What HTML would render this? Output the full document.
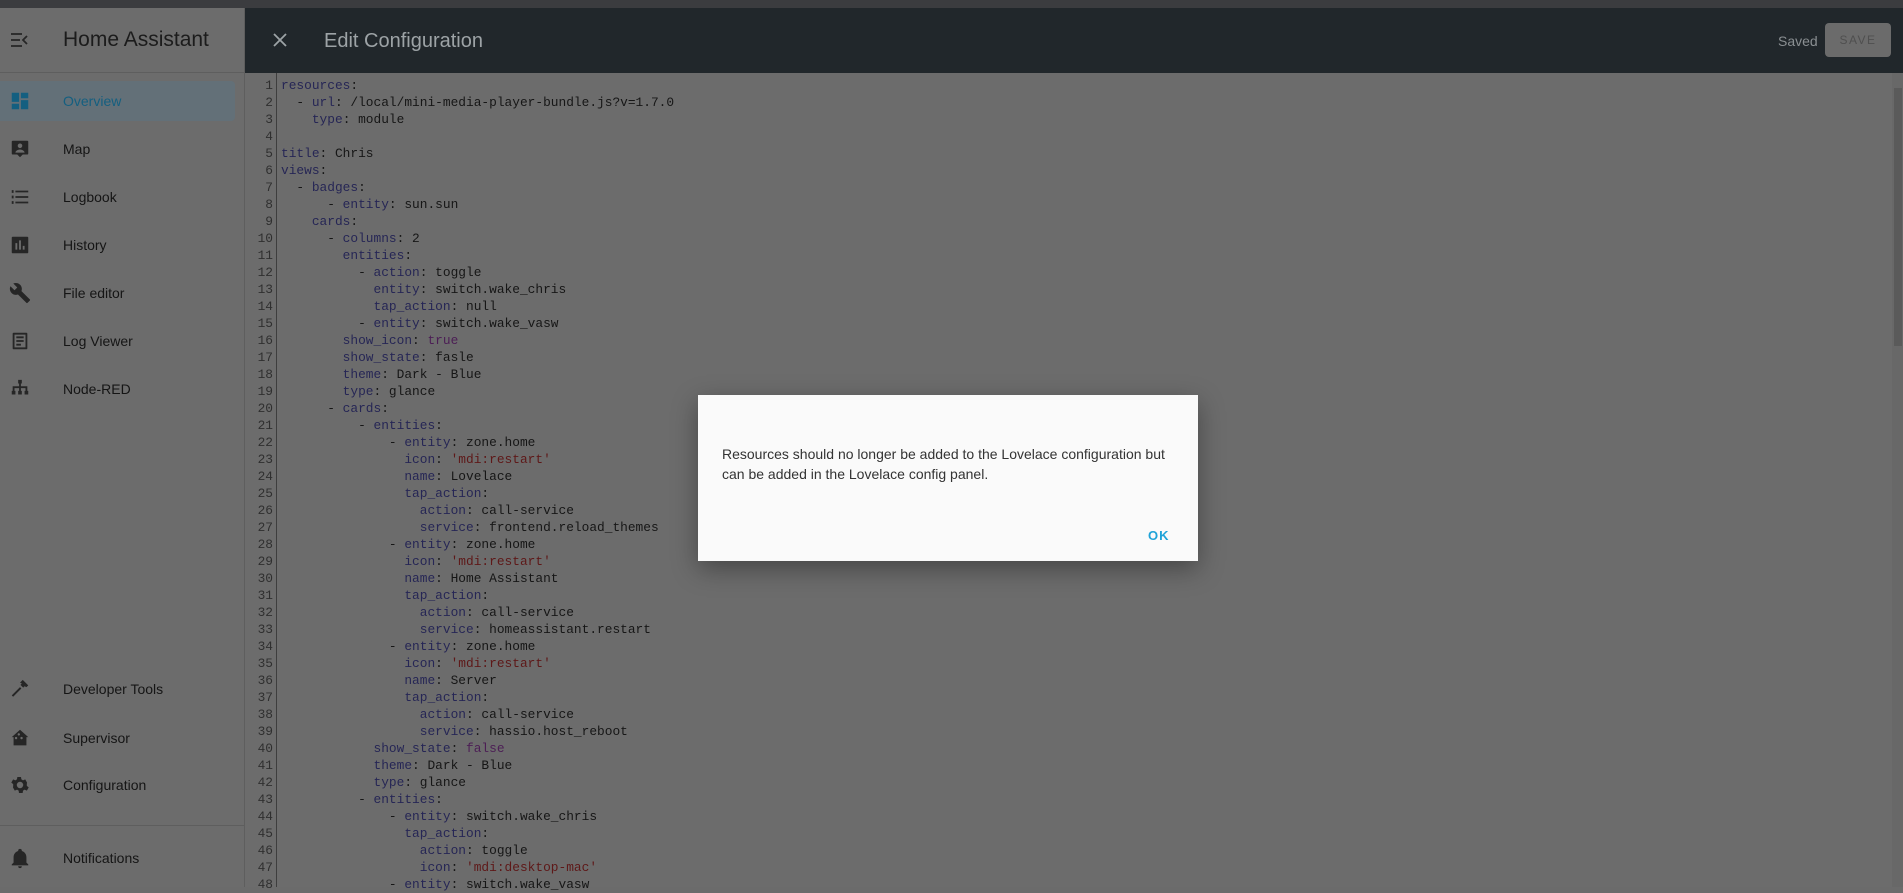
<!DOCTYPE html>
<html><head><meta charset="utf-8"><style>
*{margin:0;padding:0;box-sizing:border-box}
html,body{width:1903px;height:887px;overflow:hidden;background:#6b6b6b;font-family:"Liberation Sans",sans-serif}
.top{position:absolute;left:0;top:0;width:1903px;height:8px;background:#3b3c3f}
.side{position:absolute;left:0;top:8px;width:245px;height:879px;background:#6c6c6c;border-right:1px solid #5e5e5e}
.sh{height:65px;border-bottom:1px solid #5e5e5e;position:relative}
.sh .t{position:absolute;left:63px;top:20px;font-size:21px;color:#1c1c1c}
.item{position:absolute;left:0;height:40px;width:245px}
.item .l{position:absolute;left:63px;top:12px;font-size:14px;color:#151515;letter-spacing:0px}
.item svg{position:absolute;left:9px;top:9px}
.sel{background:#637078;width:235px;border-radius:0 4px 4px 0}
.sel .l{color:#145f80}
.hdr{position:absolute;left:245px;top:8px;width:1658px;height:65px;background:#21272b}
.hdr .t{position:absolute;left:79px;top:22px;font-size:20px;color:#9da3a6}
.saved{position:absolute;left:1533px;top:25px;font-size:14px;color:#8a8f92}
.save{position:absolute;left:1580px;top:15px;width:66px;height:34px;background:#6b6b6b;border-radius:4px;color:#4f4f4f;font-size:12px;letter-spacing:1.5px;text-align:center;line-height:34px}
.code{position:absolute;left:245px;top:73px;width:1647px;height:814px;background:#6c6c6c}
.gut{position:absolute;left:245px;top:73px;width:32px;height:814px;border-right:1px solid #3e3e3e}
pre{position:absolute;top:77px;font-family:"Liberation Mono",monospace;font-size:12.85px;line-height:17px}
.num{left:245px;width:28px;text-align:right;color:#2f2f2f}
.src{left:281px;color:#161616}
.k{color:#262655}.b{color:#4c1e55}.s{color:#5e1818}
.sb{position:absolute;left:1892px;top:73px;width:11px;height:814px;background:#686868}
.th{position:absolute;left:1894px;top:88px;width:8px;height:258px;background:#5a5a5a}
.dlg{position:absolute;left:698px;top:395px;width:500px;height:166px;background:#fafafa;box-shadow:0 8px 24px rgba(0,0,0,.35)}
.dlg p{position:absolute;left:24px;top:49px;width:460px;font-size:14px;line-height:20px;color:#333}
.ok{position:absolute;left:450px;top:133px;font-size:13px;font-weight:bold;color:#1fa3d8;letter-spacing:1px}
</style></head><body>
<div class="top"></div>
<div class="side">
 <div class="sh">
  <svg style="position:absolute;left:10px;top:24px" width="20" height="16" viewBox="0 0 20 16"><path d="M1 2h11M1 8h9M1 14h11M17 4l-4 4 4 4" stroke="#262626" stroke-width="1.8" fill="none"/></svg>
  <div class="t">Home Assistant</div>
 </div>
 <div class="item sel" style="top:73px"><svg width="22" height="22" viewBox="0 0 24 24"><path fill="#145f80" d="M13 3v6h8V3m-8 18h8V11h-8M3 21h8v-6H3m0-2h8V3H3v10z"/></svg><span class="l">Overview</span></div>
 <div class="item" style="top:121px"><svg width="22" height="22" viewBox="0 0 24 24"><path fill="#262626" d="M4 3h16a1 1 0 011 1v13a1 1 0 01-1 1h-5l-3 3-3-3H4a1 1 0 01-1-1V4a1 1 0 011-1zm8 3a2.5 2.5 0 100 5 2.5 2.5 0 000-5zm-5 10h10c0-2-3-3.5-5-3.5S7 14 7 16z"/></svg><span class="l">Map</span></div>
 <div class="item" style="top:169px"><svg width="22" height="22" viewBox="0 0 24 24"><path fill="#262626" d="M7 5h14v2H7zm0 6h14v2H7zm0 6h14v2H7zM3 4.5h2v3H3zm0 6h2v3H3zm0 6h2v3H3z"/></svg><span class="l">Logbook</span></div>
 <div class="item" style="top:217px"><svg width="22" height="22" viewBox="0 0 24 24"><path fill="#262626" d="M4 3h16a1 1 0 011 1v16a1 1 0 01-1 1H4a1 1 0 01-1-1V4a1 1 0 011-1zm3 14h2v-7H7zm4 0h2V7h-2zm4 0h2v-4h-2z"/></svg><span class="l">History</span></div>
 <div class="item" style="top:265px"><svg width="22" height="22" viewBox="0 0 24 24"><path fill="#262626" d="M22.7 19l-9.1-9.1c.9-2.3.4-5-1.5-6.9-2-2-5-2.4-7.4-1.3L9 6 6 9 1.6 4.7C.4 7.1.9 10.1 2.9 12.1c1.9 1.9 4.600 2.4 6.900 1.5l9.100 9.100c.4.4 1 .4 1.400 0l2.300-2.300c.5-.4.5-1.100.1-1.400z"/></svg><span class="l">File editor</span></div>
 <div class="item" style="top:313px"><svg width="22" height="22" viewBox="0 0 24 24"><path fill="#262626" d="M5 3h14a1 1 0 011 1v16a1 1 0 01-1 1H5a1 1 0 01-1-1V4a1 1 0 011-1zm1 2v14h12V5zm2 2h8v2H8zm0 4h8v2H8zm0 4h5v2H8z"/></svg><span class="l">Log Viewer</span></div>
 <div class="item" style="top:361px"><svg width="22" height="22" viewBox="0 0 24 24"><path fill="#262626" d="M10 2h4v4h-1v3h7v5h1v4h-4v-4h1v-3h-5v3h1v4h-4v-4h1v-3H6v3h1v4H3v-4h1V9h7V6h-1z"/></svg><span class="l">Node-RED</span></div>
 <div class="item" style="top:661px"><svg width="22" height="22" viewBox="0 0 24 24"><path fill="#262626" d="M3 19l9-9 1.5 1.5-9 9zM12 5l3-3 6 6-2 2-2-1-1.5 1.5-3-3L14 6z"/></svg><span class="l">Developer Tools</span></div>
 <div class="item" style="top:710px"><svg width="22" height="22" viewBox="0 0 24 24"><path fill="#262626" d="M12 3l9 8h-2v9H5v-9H3zm-3 9a1.3 1.3 0 100 .1zm6 0a1.3 1.3 0 100 .1zM12 8a1.3 1.3 0 100 .1z"/></svg><span class="l">Supervisor</span></div>
 <div class="item" style="top:757px"><svg width="22" height="22" viewBox="0 0 24 24"><path fill="#262626" d="M12 8.5a3.5 3.5 0 100 7 3.5 3.5 0 000-7zm7.4 4.5l2.1 1.6-2 3.5-2.5-1a7 7 0 01-1.7 1l-.4 2.6h-4l-.4-2.6a7 7 0 01-1.7-1l-2.5 1-2-3.5L4.6 13a7 7 0 010-2L2.5 9.4l2-3.5 2.5 1a7 7 0 011.7-1L9.1 3.3h4l.4 2.6a7 7 0 011.7 1l2.5-1 2 3.5L19.4 11a7 7 0 010 2z"/></svg><span class="l">Configuration</span></div>
 <div style="position:absolute;left:0;top:817px;width:245px;border-top:1px solid #5e5e5e"></div>
 <div class="item" style="top:830px"><svg width="22" height="22" viewBox="0 0 24 24"><path fill="#262626" d="M10 21h4a2 2 0 01-4 0zm11-2v1H3v-1l2-2v-6c0-3.1 2-5.8 5-6.7V4a2 2 0 014 0v.3c3 .9 5 3.6 5 6.7v6z"/></svg><span class="l">Notifications</span></div>
</div>
<div class="hdr">
 <svg style="position:absolute;left:28px;top:25px" width="14" height="14" viewBox="0 0 14 14"><path d="M1 1l12 12M13 1L1 13" stroke="#9da3a6" stroke-width="1.8"/></svg>
 <div class="t">Edit Configuration</div>
 <div class="saved">Saved</div>
 <div class="save">SAVE</div>
</div>
<div class="code"></div>
<div class="gut"></div>
<pre class="num">1
2
3
4
5
6
7
8
9
10
11
12
13
14
15
16
17
18
19
20
21
22
23
24
25
26
27
28
29
30
31
32
33
34
35
36
37
38
39
40
41
42
43
44
45
46
47
48</pre>
<pre class="src"><span class="k">resources</span>:
  - <span class="k">url</span>: /local/mini-media-player-bundle.js?v=1.7.0
    <span class="k">type</span>: module

<span class="k">title</span>: Chris
<span class="k">views</span>:
  - <span class="k">badges</span>:
      - <span class="k">entity</span>: sun.sun
    <span class="k">cards</span>:
      - <span class="k">columns</span>: 2
        <span class="k">entities</span>:
          - <span class="k">action</span>: toggle
            <span class="k">entity</span>: switch.wake_chris
            <span class="k">tap_action</span>: null
          - <span class="k">entity</span>: switch.wake_vasw
        <span class="k">show_icon</span>: <span class="b">true</span>
        <span class="k">show_state</span>: fasle
        <span class="k">theme</span>: Dark - Blue
        <span class="k">type</span>: glance
      - <span class="k">cards</span>:
          - <span class="k">entities</span>:
              - <span class="k">entity</span>: zone.home
                <span class="k">icon</span>: <span class="s">'mdi:restart'</span>
                <span class="k">name</span>: Lovelace
                <span class="k">tap_action</span>:
                  <span class="k">action</span>: call-service
                  <span class="k">service</span>: frontend.reload_themes
              - <span class="k">entity</span>: zone.home
                <span class="k">icon</span>: <span class="s">'mdi:restart'</span>
                <span class="k">name</span>: Home Assistant
                <span class="k">tap_action</span>:
                  <span class="k">action</span>: call-service
                  <span class="k">service</span>: homeassistant.restart
              - <span class="k">entity</span>: zone.home
                <span class="k">icon</span>: <span class="s">'mdi:restart'</span>
                <span class="k">name</span>: Server
                <span class="k">tap_action</span>:
                  <span class="k">action</span>: call-service
                  <span class="k">service</span>: hassio.host_reboot
            <span class="k">show_state</span>: <span class="b">false</span>
            <span class="k">theme</span>: Dark - Blue
            <span class="k">type</span>: glance
          - <span class="k">entities</span>:
              - <span class="k">entity</span>: switch.wake_chris
                <span class="k">tap_action</span>:
                  <span class="k">action</span>: toggle
                  <span class="k">icon</span>: <span class="s">'mdi:desktop-mac'</span>
              - <span class="k">entity</span>: switch.wake_vasw</pre>
<div class="sb"></div><div class="th"></div>
<div class="dlg">
 <p>Resources should no longer be added to the Lovelace configuration but can be added in the Lovelace config panel.</p>
 <div class="ok">OK</div>
</div>
</body></html>
